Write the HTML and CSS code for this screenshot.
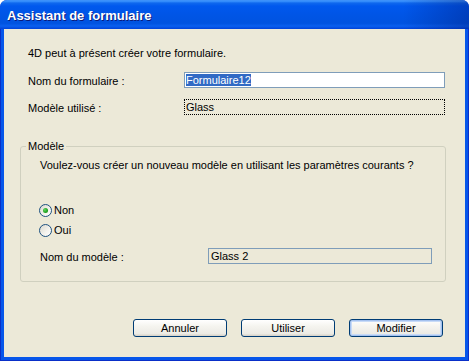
FILE: index.html
```html
<!DOCTYPE html>
<html lang="fr">
<head>
  <meta charset="UTF-8">
  <title>Assistant de formulaire</title>
  <link rel="stylesheet" href="styles.css">
</head>
<body>

  <div class="window">
    <div class="titlebar">
      <span class="title">Assistant de formulaire</span>
    </div>

    <div class="client">
      <p class="intro">4D peut à présent créer votre formulaire.</p>

      <div class="row row-name">
        <label class="label">Nom du formulaire :</label>
        <div class="field field-edit"><span class="selected">Formulaire12</span></div>
      </div>

      <div class="row row-model">
        <span class="label">Modèle utilisé :</span>
        <div class="field field-focus">Glass</div>
      </div>

      <fieldset class="group">
        <legend>Modèle</legend>
        <div class="group-body">
          <p class="question">Voulez-vous créer un nouveau modèle en utilisant les paramètres courants ?</p>

          <div class="radio-row radio-non"><span class="radio checked"></span>Non</div>
          <div class="radio-row radio-oui"><span class="radio"></span>Oui</div>

          <div class="row row-template">
            <span class="label label-wide">Nom du modèle :</span>
            <div class="field field-readonly">Glass 2</div>
          </div>
        </div>
      </fieldset>

      <div class="buttons">
        <button class="btn">Annuler</button>
        <button class="btn">Utiliser</button>
        <button class="btn btn-default">Modifier</button>
      </div>
    </div>
  </div>

</body>
</html>
```

FILE: styles.css
```css
* { box-sizing: border-box; }

body {
  margin: 0;
  background: #ffffff;
  font-family: "Liberation Sans", Tahoma, Arial, sans-serif;
  font-size: 11px;
  color: #000000;
}

.window {
  width: 469px;
  height: 361px;
  display: flex;
  flex-direction: column;
  background: #0a2fc8;
  border-radius: 7px 7px 0 0;
  overflow: hidden;
}

/* barre de titre XP */
.titlebar {
  height: 29px;
  padding: 2px 0 0 7px;
  background:
    linear-gradient(to right, rgba(0,0,0,0) 86%, rgba(0,20,110,0.35) 100%),
    linear-gradient(to bottom, #3b8cf5 0, #3d95ff 1px, #0f68ee 3px, #0058ee 6px, #0055e6 50%, #0053e0 80%, #0a60ef 90%, #0042d8 100%);
}

.title {
  font-weight: bold;
  font-size: 13px;
  line-height: 27px;
  color: #ffffff;
  text-shadow: 1px 1px 0 #0b1a7a;
}

.client {
  flex: 1;
  margin: 0 1px 1px 1px;
  border: 3px solid #0656ea;
  border-top: none;
  background: #ece9d8;
  padding: 17px 19px 0 16px;
}

.intro {
  margin: 0;
  padding-left: 8px;
  line-height: 14px;
}

.row {
  display: flex;
  align-items: flex-start;
  padding: 0 1px 0 8px;
}

.row-name { margin-top: 12px; }
.row-model { margin-top: 9px; }

.label {
  width: 156px;
  line-height: 18px;
}

.label-wide { width: 168px; }

.field {
  flex: 1;
  height: 16px;
  line-height: 14px;
  padding-left: 1px;
  white-space: nowrap;
}

.field-edit {
  background: #ffffff;
  border: 1px solid #7f9db9;
}

.selected {
  background: #316ac5;
  color: #ffffff;
}

.field-focus {
  border: 1px dotted #000000;
}

.field-readonly {
  border: 1px solid #7f9db9;
  padding-left: 2px;
}

/* cadre Modèle */
.group {
  margin: 22px 0 0 0;
  padding: 0 13px 15px 5px;
  border: 1px solid #d0d0bf;
  border-radius: 3px;
  min-width: 0;
}

.group legend {
  padding: 0 2px;
  line-height: 14px;
}

.group-body {
  padding-left: 14px;
}

.question {
  margin: 5px 0 0 0;
  line-height: 14px;
}

.radio-row {
  display: flex;
  align-items: center;
  gap: 2px;
  line-height: 14px;
}

.radio-non { margin-top: 31px; }
.radio-oui { margin-top: 6px; }

.radio {
  width: 13px;
  height: 13px;
  margin-left: -1px;
  border: 1px solid #1c5180;
  border-radius: 50%;
  background: linear-gradient(135deg, #dcd9cd 0%, #f4f3ee 60%, #ffffff 100%);
  display: flex;
  align-items: center;
  justify-content: center;
}

.radio.checked::after {
  content: "";
  width: 5px;
  height: 5px;
  border-radius: 50%;
  background: radial-gradient(circle at 35% 35%, #5fd65f 0%, #21a121 60%, #1a8a1a 100%);
}

.row-template {
  margin-top: 11px;
  padding: 0;
}

/* boutons */
.buttons {
  display: flex;
  justify-content: flex-end;
  gap: 14px;
  margin-top: 37px;
  padding-right: 3px;
}

.btn {
  width: 94px;
  height: 18px;
  padding: 0;
  font-family: inherit;
  font-size: 11px;
  line-height: 16px;
  color: #000000;
  border: 1px solid #003c74;
  border-radius: 3px;
  background: linear-gradient(to bottom, #ffffff 0%, #f5f4ef 40%, #ecebe5 85%, #d6d0c5 100%);
}

.btn-default {
  box-shadow: inset 0 0 0 1px #a5c2ef, inset 0 0 0 2px #c8dbf7;
}
```
